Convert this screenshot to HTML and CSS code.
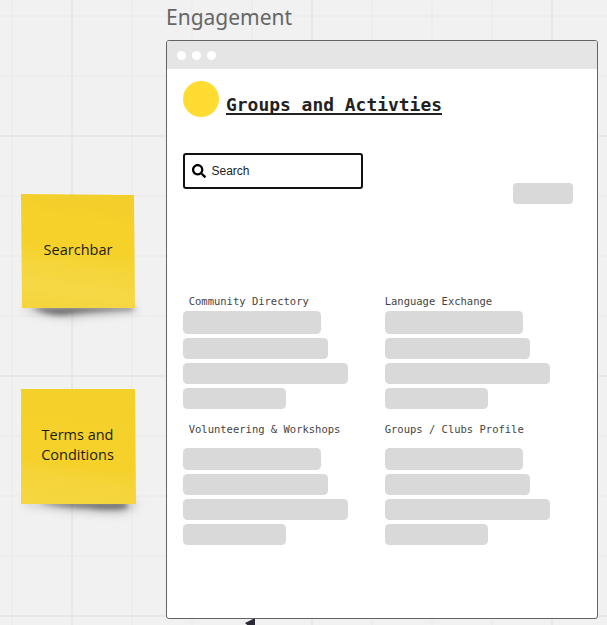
FILE: index.html
```html
<!DOCTYPE html>
<html lang="en">
<head>
<meta charset="utf-8">
<title>Engagement</title>
<link rel="stylesheet" href="styles.css">
</head>
<body>
<main class="board">
  <section class="note note-search">
    <svg class="shadow" viewBox="0 0 124 28"><path class="soft" d="M7 0H120V4Q105 7 70 9Q45 15 7 3Z"/><path class="core" d="M16 0H116V3Q75 4 44 8Q30 8 16 1Z"/></svg>
    <div class="paper"><span>Searchbar</span></div>
  </section>
  <section class="note note-terms">
    <svg class="shadow" viewBox="0 0 124 28"><path class="soft" d="M7 0H120V4L104 12Q60 11 7 3Z"/><path class="core" d="M24 0H110V6Q92 9 72 6Q42 5 24 1Z"/></svg>
    <div class="paper"><span>Terms and<br>Conditions</span></div>
  </section>

  <h1 class="frame-name">Engagement</h1>
  <svg class="pointer" viewBox="0 0 10 14"><path d="M0 5L10 0V14Z"/></svg>
  <article class="frame">
    <header class="chrome"><i></i><i></i><i></i></header>
    <div class="brand"><span class="avatar"></span><h2>Groups and Activties</h2></div>
    <div class="search">
      <svg viewBox="0 0 512 512"><path d="M505 442.700 405.300 343c-4.500-4.500-10.600-7-17-7H372c27.600-35.300 44-79.700 44-128C416 93.100 322.900 0 208 0S0 93.100 0 208s93.100 208 208 208c48.300 0 92.700-16.400 128-44v16.300c0 6.400 2.500 12.500 7 17l99.700 99.700c9.400 9.400 24.600 9.400 33.900 0l28.300-28.300c9.400-9.400 9.400-24.600.1-34zM208 336c-70.700 0-128-57.200-128-128S137.200 80 208 80s128 57.200 128 128-57.200 128-128 128z"/></svg>
      <span>Search</span>
    </div>
    <div class="action"></div>
    <div class="groups">
      <section class="group"><h3>Community Directory</h3><b></b><b></b><b></b><b></b></section>
      <section class="group"><h3>Language Exchange</h3><b></b><b></b><b></b><b></b></section>
      <section class="group lower"><h3>Volunteering &amp; Workshops</h3><b></b><b></b><b></b><b></b></section>
      <section class="group lower"><h3>Groups / Clubs Profile</h3><b></b><b></b><b></b><b></b></section>
    </div>
  </article>
</main>
</body>
</html>
```

FILE: styles.css
```css
* { box-sizing: border-box; }
body { margin: 0; }
h1, h2, h3 { margin: 0; font-weight: 400; }

.board {
  position: relative;
  width: 607px;
  height: 625px;
  overflow: hidden;
  background-color: #f1f1f1;
  background-image:
    linear-gradient(90deg, #e1e1e1 1.500px, transparent 1.500px),
    linear-gradient(#e1e1e1 1.500px, transparent 1.500px),
    linear-gradient(90deg, #e8e8e8 1.500px, transparent 1.500px),
    linear-gradient(#e8e8e8 1.500px, transparent 1.500px);
  background-size: 240px 240px, 240px 240px, 60px 60px, 60px 60px;
  background-position: 71.500px 0, 0 135.500px, 11.500px 0, 0 15.500px;
}

.frame-name {
  position: absolute;
  left: 166px;
  top: 2px;
  font: 21px/30px "Noto Sans", sans-serif;
  color: #666;
  white-space: nowrap;
}

.note { position: absolute; left: 21px; width: 115px; height: 115px; }
.note-search { top: 194px; }
.note-terms { top: 389px; }
.paper {
  position: relative;
  display: flex;
  align-items: center;
  justify-content: center;
  height: 100%;
  text-align: center;
  font: 14.500px/20px "Open Sans", sans-serif;
  color: #1c1c14;
}
.note-search .paper {
  padding-right: 1px;
  padding-bottom: 3px;
  background: linear-gradient(188deg, #f2cf2a 0, #f2cf2a 16%, #f5d12a 24%, #f5d12a 48%, #f5d539 62%, #f6d847 80%, #f5d43a 100%);
  clip-path: polygon(0 0, 113px 1px, 114px 114px, 1px 114px);
}
.note-terms .paper {
  padding-right: 2px;
  padding-bottom: 3px;
  background: linear-gradient(188deg, #f4d02a 0, #f5d12a 64%, #f5d43a 76%, #f6d73f 100%);
  clip-path: polygon(0 0, 114px 0, 115px 115px, 0 115px);
}
.shadow {
  position: absolute;
  left: -4px;
  top: 113px;
  width: 124px;
  height: 28px;
  overflow: visible;
}
.soft { fill: #777; opacity: .4; filter: blur(4px); }
.core { fill: #444; opacity: .65; filter: blur(2.500px); }

.pointer { position: absolute; left: 245px; top: 618px; width: 10px; height: 14px; fill: #2b2b38; }

.frame {
  position: absolute;
  left: 166px;
  top: 40px;
  width: 432px;
  height: 579px;
  overflow: hidden;
  border: 1px solid #636363;
  border-radius: 3px;
  background: #fff;
}
.chrome {
  display: flex;
  align-items: center;
  gap: 6px;
  height: 28px;
  padding-left: 10px;
  background: #e5e5e5;
}
.chrome i { width: 9px; height: 9px; border-radius: 50%; background: #fff; }

.brand { display: flex; gap: 7px; margin: 12px 0 0 16px; }
.avatar { width: 36px; height: 36px; border-radius: 50%; background: #ffdc32; }
.brand h2 {
  padding-top: 12px;
  font: 700 17.940px/24px "DejaVu Sans Mono", monospace;
  color: #222;
  text-decoration: underline;
  text-decoration-thickness: 1.500px;
  text-underline-offset: 1.500px;
  text-decoration-skip-ink: none;
}

.search {
  display: flex;
  align-items: center;
  gap: 6px;
  width: 180px;
  height: 36px;
  margin: 36px 0 0 15.500px;
  padding-left: 7px;
  border: 2px solid #111;
  border-radius: 3px;
  font: 12px/16px "Liberation Sans", sans-serif;
  color: #222;
}
.search svg { width: 14px; height: 14px; fill: #000; }

.action {
  width: 60px;
  height: 21px;
  margin: -5.600px 0 0 346px;
  border-radius: 4px;
  background: #d9d9d9;
}

.groups {
  display: grid;
  grid-template-columns: 202px 202px;
  margin: 88.600px 0 0 15.700px;
}
.group { display: flex; flex-direction: column; height: 128px; }
.group h3 {
  height: 18.200px;
  padding-left: 6px;
  font: 10.500px/16px "DejaVu Sans Mono", monospace;
  color: #444;
  white-space: nowrap;
}
.group:nth-child(even) h3 { padding-left: 0; }
.group.lower h3 { height: 26.500px; }
.group b { height: 21px; margin-bottom: 4px; border-radius: 4.500px; background: #d9d9d9; }
.group:nth-child(even) b { margin-left: .5px; }
.group b:nth-of-type(1) { width: 138px; height: 22.400px; }
.group b:nth-of-type(2) { width: 145px; }
.group b:nth-of-type(3) { width: 165px; }
.group b:nth-of-type(4) { width: 103px; }
```
